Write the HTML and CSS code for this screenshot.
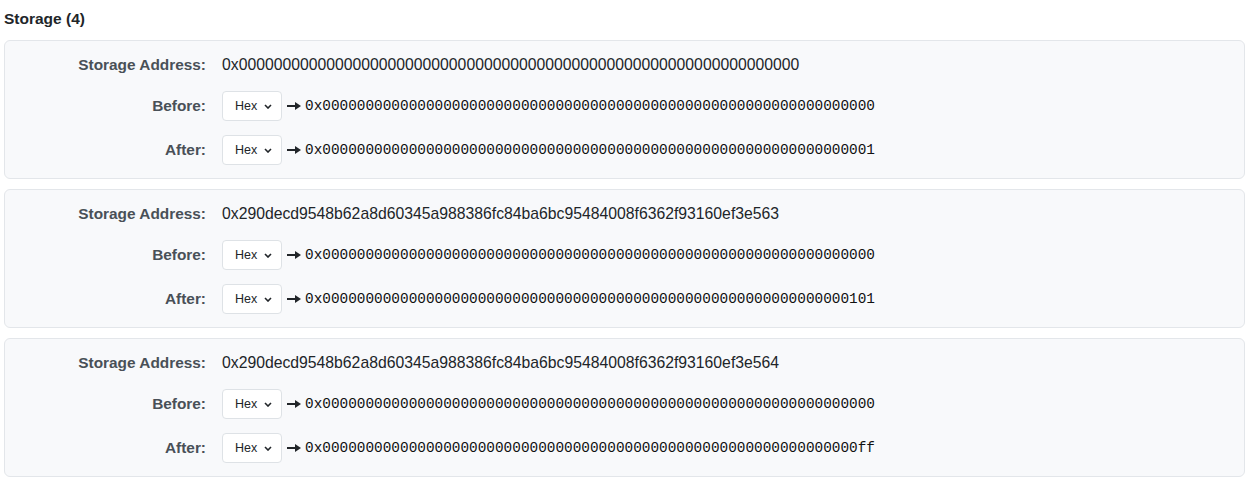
FILE: index.html
```html
<!DOCTYPE html>
<html lang="en">
<head>
  <meta charset="UTF-8" />
  <meta name="viewport" content="width=device-width, initial-scale=1.0" />
  <title>Storage</title>
  <link rel="stylesheet" href="styles.css">
</head>
<body>
  <h2 class="title">Storage (4)</h2>

  <div class="slot">
    <div class="row addr">
      <span class="label">Storage Address:</span>
      <span class="value">0x0000000000000000000000000000000000000000000000000000000000000000</span>
    </div>
    <div class="row">
      <span class="label">Before:</span>
      <div class="value change">
        <div class="fmt">
          <select><option>Hex</option><option>Dec</option></select>
          <svg class="chev" viewBox="0 0 8 5" width="8" height="5"><path d="M1 1l3 3 3-3" fill="none" stroke="#212529" stroke-width="1.6"/></svg>
        </div>
        <svg class="arrow" viewBox="0 0 14 8" width="14" height="8"><path d="M0 3h9v2H0z M8 0l6 4-6 4z" fill="#212529"/></svg>
        <code>0x0000000000000000000000000000000000000000000000000000000000000000</code>
      </div>
    </div>
    <div class="row">
      <span class="label">After:</span>
      <div class="value change">
        <div class="fmt">
          <select><option>Hex</option><option>Dec</option></select>
          <svg class="chev" viewBox="0 0 8 5" width="8" height="5"><path d="M1 1l3 3 3-3" fill="none" stroke="#212529" stroke-width="1.6"/></svg>
        </div>
        <svg class="arrow" viewBox="0 0 14 8" width="14" height="8"><path d="M0 3h9v2H0z M8 0l6 4-6 4z" fill="#212529"/></svg>
        <code>0x0000000000000000000000000000000000000000000000000000000000000001</code>
      </div>
    </div>
  </div>

  <div class="slot">
    <div class="row addr">
      <span class="label">Storage Address:</span>
      <span class="value">0x290decd9548b62a8d60345a988386fc84ba6bc95484008f6362f93160ef3e563</span>
    </div>
    <div class="row">
      <span class="label">Before:</span>
      <div class="value change">
        <div class="fmt">
          <select><option>Hex</option><option>Dec</option></select>
          <svg class="chev" viewBox="0 0 8 5" width="8" height="5"><path d="M1 1l3 3 3-3" fill="none" stroke="#212529" stroke-width="1.6"/></svg>
        </div>
        <svg class="arrow" viewBox="0 0 14 8" width="14" height="8"><path d="M0 3h9v2H0z M8 0l6 4-6 4z" fill="#212529"/></svg>
        <code>0x0000000000000000000000000000000000000000000000000000000000000000</code>
      </div>
    </div>
    <div class="row">
      <span class="label">After:</span>
      <div class="value change">
        <div class="fmt">
          <select><option>Hex</option><option>Dec</option></select>
          <svg class="chev" viewBox="0 0 8 5" width="8" height="5"><path d="M1 1l3 3 3-3" fill="none" stroke="#212529" stroke-width="1.6"/></svg>
        </div>
        <svg class="arrow" viewBox="0 0 14 8" width="14" height="8"><path d="M0 3h9v2H0z M8 0l6 4-6 4z" fill="#212529"/></svg>
        <code>0x0000000000000000000000000000000000000000000000000000000000000101</code>
      </div>
    </div>
  </div>

  <div class="slot">
    <div class="row addr">
      <span class="label">Storage Address:</span>
      <span class="value">0x290decd9548b62a8d60345a988386fc84ba6bc95484008f6362f93160ef3e564</span>
    </div>
    <div class="row">
      <span class="label">Before:</span>
      <div class="value change">
        <div class="fmt">
          <select><option>Hex</option><option>Dec</option></select>
          <svg class="chev" viewBox="0 0 8 5" width="8" height="5"><path d="M1 1l3 3 3-3" fill="none" stroke="#212529" stroke-width="1.6"/></svg>
        </div>
        <svg class="arrow" viewBox="0 0 14 8" width="14" height="8"><path d="M0 3h9v2H0z M8 0l6 4-6 4z" fill="#212529"/></svg>
        <code>0x0000000000000000000000000000000000000000000000000000000000000000</code>
      </div>
    </div>
    <div class="row">
      <span class="label">After:</span>
      <div class="value change">
        <div class="fmt">
          <select><option>Hex</option><option>Dec</option></select>
          <svg class="chev" viewBox="0 0 8 5" width="8" height="5"><path d="M1 1l3 3 3-3" fill="none" stroke="#212529" stroke-width="1.6"/></svg>
        </div>
        <svg class="arrow" viewBox="0 0 14 8" width="14" height="8"><path d="M0 3h9v2H0z M8 0l6 4-6 4z" fill="#212529"/></svg>
        <code>0x00000000000000000000000000000000000000000000000000000000000000ff</code>
      </div>
    </div>
  </div>
</body>
</html>
```

FILE: styles.css
```css
* {
  box-sizing: border-box;
}
body {
  margin: 0;
  padding: 0 4px;
  background: #fff;
  color: #212529;
  font-family: 'Liberation Sans', Arial, sans-serif;
}
.title {
  margin: 0 0 11px;
  padding-top: 9px;
  font-size: 15.5px;
  line-height: 20px;
  font-weight: bold;
}
.slot {
  display: grid;
  grid-template-rows: 24px 30px 30px;
  row-gap: 14px;
  padding: 12px 0 13px;
  margin-bottom: 10px;
  background: #f8f9fb;
  border: 1px solid #e3e6ea;
  border-radius: 6px;
}
.row {
  display: grid;
  grid-template-columns: 201px 1fr;
  column-gap: 16px;
  align-items: center;
}
.label {
  text-align: right;
  font-size: 15.4px;
  line-height: 20px;
  font-weight: bold;
  color: #495057;
}
.addr .value {
  font-size: 15.75px;
  line-height: 20px;
}
.change {
  display: flex;
  align-items: center;
}
.fmt {
  position: relative;
  width: 60px;
  height: 30px;
}
.fmt select {
  appearance: none;
  -webkit-appearance: none;
  width: 100%;
  height: 100%;
  padding: 0 0 0 12px;
  background: #fff;
  border: 1px solid #dee2e6;
  border-radius: 4px;
  font-family: 'Liberation Sans', Arial, sans-serif;
  font-size: 12.5px;
  color: #212529;
}
.chev {
  position: absolute;
  left: 42px;
  top: 13px;
  pointer-events: none;
}
.arrow {
  margin: 0 4px 0 5px;
}
code {
  font-family: 'Liberation Mono', 'Courier New', monospace;
  font-size: 14.4px;
  color: #111;
}
```
